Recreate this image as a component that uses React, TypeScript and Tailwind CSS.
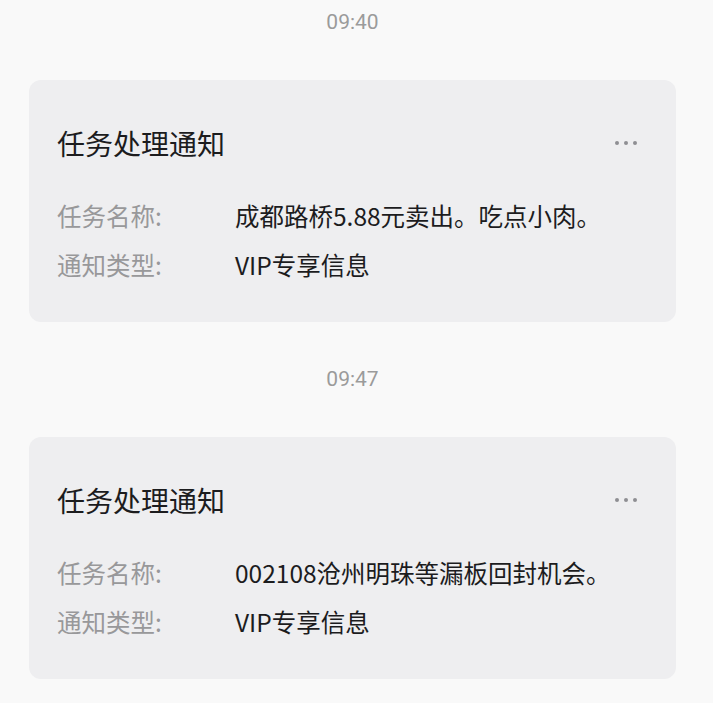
const FONT = "font-['Noto_Sans_CJK_SC','Noto_Sans',sans-serif]"

type Notice = {
  time: string
  taskName: string
  noticeType: string
}

const notices: Notice[] = [
  { time: '09:40', taskName: '成都路桥5.88元卖出。吃点小肉。', noticeType: 'VIP专享信息' },
  { time: '09:47', taskName: '002108沧州明珠等漏板回封机会。', noticeType: 'VIP专享信息' },
]

function MoreDots() {
  return (
    <div className="flex items-center gap-[5px]">
      <span className="h-[4px] w-[4px] rounded-full bg-[#8e8e93]" />
      <span className="h-[4px] w-[4px] rounded-full bg-[#8e8e93]" />
      <span className="h-[4px] w-[4px] rounded-full bg-[#8e8e93]" />
    </div>
  )
}

function NoticeCard({ notice }: { notice: Notice }) {
  return (
    <section className="flex flex-col">
      <div className="flex h-[44px] items-center justify-center pt-[1px]">
        <span className="font-['Roboto',sans-serif] text-[21px] text-[#9b9b9b]">{notice.time}</span>
      </div>
      <div className="mt-[36px] rounded-[12px] bg-[#eeeef0] pb-[39px] pl-[28px] pr-[39px] pt-[45px]">
        <div className="flex h-[36px] items-center justify-between">
          <h2 className="text-[28px] leading-[36px] font-normal text-[#1c1c1e]">任务处理通知</h2>
          <MoreDots />
        </div>
        <dl className="mt-[37px] flex flex-col gap-[13px] text-[24.5px] leading-[36px]">
          <div className="flex">
            <dt className="w-[178px] shrink-0 text-[#98989a]">任务名称:</dt>
            <dd className="text-[#1c1c1e]">{notice.taskName}</dd>
          </div>
          <div className="flex">
            <dt className="w-[178px] shrink-0 text-[#98989a]">通知类型:</dt>
            <dd className="text-[#1c1c1e]">{notice.noticeType}</dd>
          </div>
        </dl>
      </div>
    </section>
  )
}

export default function App() {
  return (
    <div className={`min-h-[703px] bg-[#f9f9f9] px-[29px] ${FONT}`}>
      <div className="flex w-[647px] flex-col gap-[35px]">
        {notices.map((n) => (
          <NoticeCard key={n.time} notice={n} />
        ))}
      </div>
    </div>
  )
}
